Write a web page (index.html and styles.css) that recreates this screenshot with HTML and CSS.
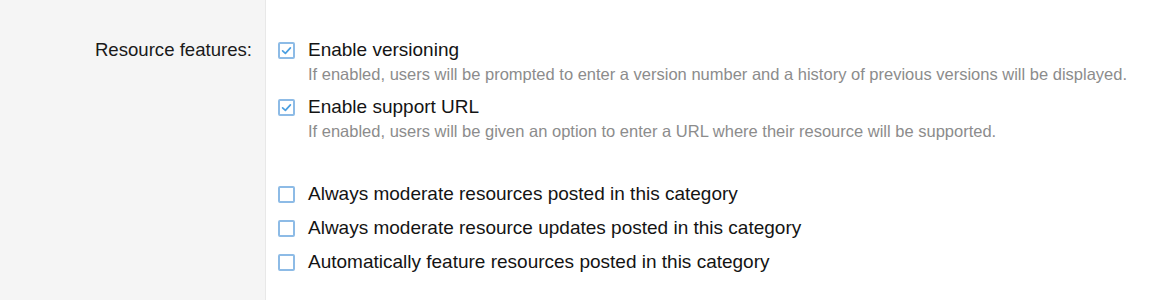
FILE: index.html
```html
<!DOCTYPE html>
<html>
<head>
<meta charset="utf-8">
<link rel="stylesheet" href="styles.css">
</head>
<body>
<div class="form-row">
  <div class="form-label">Resource features:</div>
  <div class="form-input">
    <ul class="choices">
      <li class="choice">
        <label class="option"><span class="box checked"><svg viewBox="0 0 17 17" width="17" height="17"><path d="M4.6 8.8 L7.4 11.4 L12.4 5.9" fill="none" stroke="#4b9fe1" stroke-width="1.7" stroke-linecap="round" stroke-linejoin="round"/></svg></span><span class="text">Enable versioning</span></label>
        <div class="hint">If enabled, users will be prompted to enter a version number and a history of previous versions will be displayed.</div>
      </li>
      <li class="choice">
        <label class="option"><span class="box checked"><svg viewBox="0 0 17 17" width="17" height="17"><path d="M4.6 8.8 L7.4 11.4 L12.4 5.9" fill="none" stroke="#4b9fe1" stroke-width="1.7" stroke-linecap="round" stroke-linejoin="round"/></svg></span><span class="text">Enable support URL</span></label>
        <div class="hint">If enabled, users will be given an option to enter a URL where their resource will be supported.</div>
      </li>
    </ul>
    <ul class="choices group">
      <li class="choice">
        <label class="option"><span class="box"></span><span class="text">Always moderate resources posted in this category</span></label>
      </li>
      <li class="choice">
        <label class="option"><span class="box"></span><span class="text">Always moderate resource updates posted in this category</span></label>
      </li>
      <li class="choice">
        <label class="option"><span class="box"></span><span class="text">Automatically feature resources posted in this category</span></label>
      </li>
    </ul>
  </div>
</div>
</body>
</html>
```
FILE: styles.css
```css
html, body {
  margin: 0;
  padding: 0;
  background: #ffffff;
}
body {
  font-family: "Liberation Sans", Arial, sans-serif;
  color: #141414;
}
.form-row {
  display: flex;
  height: 300px;
}
.form-label {
  width: 252px;
  flex: none;
  background: #f5f5f5;
  border-right: 1px solid #e8e8e8;
  padding: 38px 13px 0 0;
  box-sizing: content-box;
  text-align: right;
  font-size: 18.6px;
  line-height: 24px;
  color: #1a1a1a;
}
.form-input {
  flex: 1;
  padding: 38px 0 0 12px;
}
.choices {
  list-style: none;
  margin: 0;
  padding: 0;
}
.choices.group {
  margin-top: 40px;
}
.choice + .choice {
  margin-top: 10px;
}
.option {
  display: flex;
  align-items: center;
  height: 24px;
  font-size: 19px;
  line-height: 24px;
  color: #141414;
}
.box {
  width: 17px;
  height: 17px;
  box-sizing: border-box;
  border: 2px solid #8dbbe6;
  border-radius: 2px;
  background: #fff;
  margin-right: 13px;
  position: relative;
  flex: none;
}
.box svg {
  position: absolute;
  left: -2px;
  top: -2px;
}
.hint {
  margin: 2px 0 0 30px;
  font-size: 16.5px;
  line-height: 21px;
  color: #8c8c8c;
}
```
